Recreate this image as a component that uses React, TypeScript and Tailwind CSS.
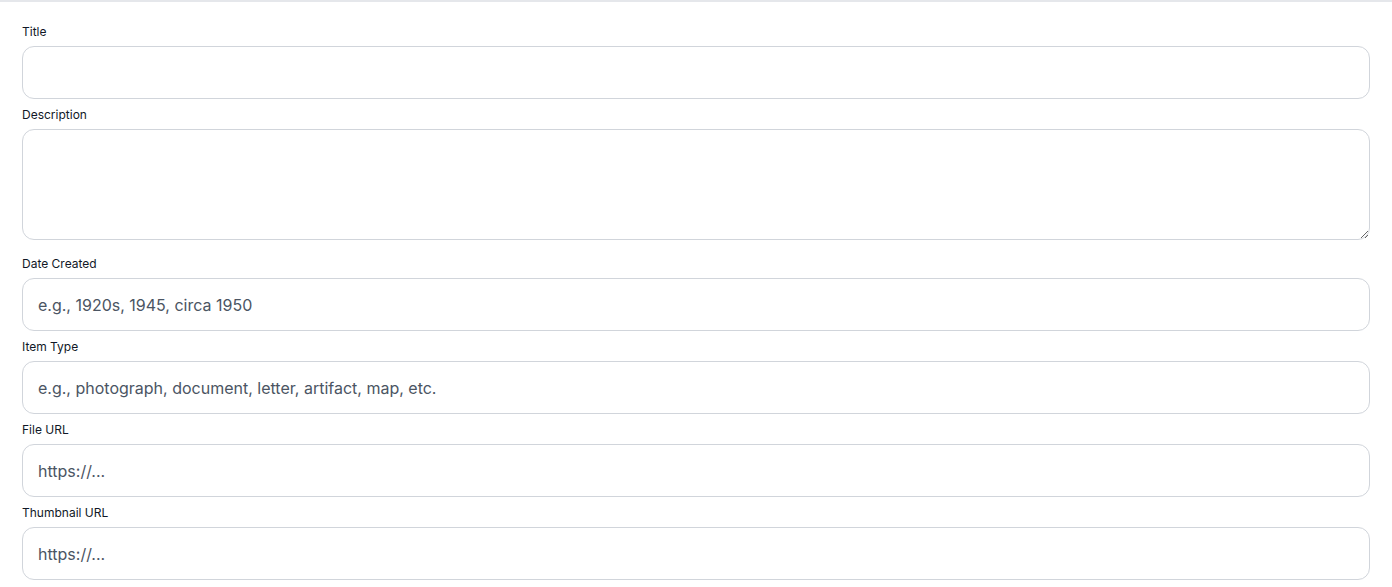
import React from "react";

type Field = {
  label: string;
  placeholder?: string;
  multiline?: boolean;
};

const fields: Field[] = [
  { label: "Title" },
  { label: "Description", multiline: true },
  { label: "Date Created", placeholder: "e.g., 1920s, 1945, circa 1950" },
  {
    label: "Item Type",
    placeholder: "e.g., photograph, document, letter, artifact, map, etc.",
  },
  { label: "File URL", placeholder: "https://..." },
  { label: "Thumbnail URL", placeholder: "https://..." },
];

const App = () => {
  return (
    <div
      className="min-h-screen bg-white border-t-2 border-[#e5e7eb]"
      style={{ fontFamily: "Inter, 'Noto Sans', sans-serif" }}
    >
      <form className="flex flex-col px-[22px] pt-[22px]">
        {fields.map((field, i) => (
          <div
            key={field.label}
            className={`flex flex-col ${i === 0 ? "" : field.label === "Date Created" ? "mt-[16px]" : "mt-[8px]"}`}
          >
            <label className="block text-xs leading-4 font-normal text-[#111827] mb-[6px]">
              {field.label}
            </label>
            {field.multiline ? (
              <textarea
                className="block w-full h-[111px] rounded-xl border border-[#d1d5db] px-4 py-3 text-base text-[#374151] outline-none resize-y"
              />
            ) : (
              <input
                type="text"
                placeholder={field.placeholder}
                className="block w-full h-[53px] rounded-xl border border-[#d1d5db] px-[15px] text-base text-[#374151] placeholder:text-[#4b5563] outline-none"
              />
            )}
          </div>
        ))}
      </form>
    </div>
  );
};

export default App;
